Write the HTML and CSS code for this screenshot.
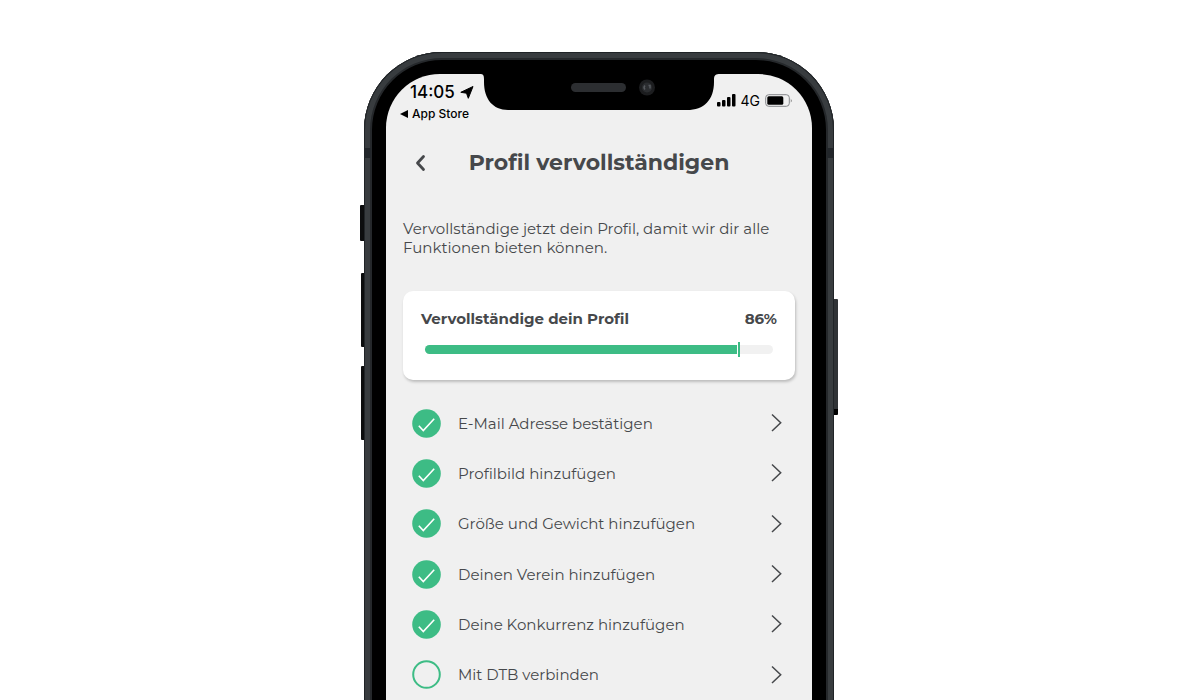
FILE: index.html
```html
<!DOCTYPE html>
<html lang="de">
<head>
<meta charset="utf-8">
<meta name="viewport" content="width=device-width, initial-scale=1">
<title>Profil vervollständigen</title>
<link rel="stylesheet" href="styles.css">
</head>
<body>
<svg width="0" height="0" class="sprite" aria-hidden="true">
  <symbol id="done" viewBox="0 0 29 29"><circle cx="14.5" cy="14.5" r="14.3" fill="#3dbc85"/><path d="M6.8 16.7 11.3 21.5 22.2 9.8" fill="none" stroke="#fff" stroke-width="1.6"/></symbol>
  <symbol id="open" viewBox="0 0 29 29"><circle cx="14.5" cy="14.5" r="13.3" fill="none" stroke="#3dbc85" stroke-width="2"/></symbol>
  <symbol id="next" viewBox="0 0 12 20"><path d="M2 1.500 10.700 9.700 2 18" fill="none" stroke="#46484b" stroke-width="1.5"/></symbol>
</svg>
<div class="phone">
  <span class="key key-mute"></span>
  <span class="key key-up"></span>
  <span class="key key-down"></span>
  <span class="key key-power"></span>
  <span class="seam seam-left"></span>
  <span class="seam seam-right"></span>
  <div class="screen">
    <svg class="notch" width="240" height="37" viewBox="0 0 240 37" aria-hidden="true">
      <path d="M0 0H240C236 0 234 1 234 5V8C234 26 224 36 207 36H28C13 36 4 25 4 8V5C4 1 3 0 0 0Z" fill="#000"/>
      <rect x="91" y="9" width="55" height="9" rx="4.5" fill="#2c2e31"/>
      <circle cx="167" cy="13.500" r="8" fill="#1c1d1f"/>
      <circle cx="167" cy="13.500" r="5" fill="#2b2d30"/>
      <path d="M165 11.500q-2 2 0 4M168.500 11.500h1.500v3" fill="none" stroke="#56595e" stroke-width="1.500"/>
    </svg>
    <div class="status">
      <div class="status-left">
        <div class="clock">14:05
          <svg width="14" height="13" viewBox="0 0 14 13" aria-hidden="true"><path d="M13 .5 8.300 12.300 6.500 7.200 .8 6.300Z" fill="#000" stroke="#000" stroke-linejoin="round"/></svg>
        </div>
        <a class="back-app" href="#"><svg width="8" height="8" viewBox="0 0 8 8" aria-hidden="true"><path d="M8 0V8L0 4Z" fill="#000"/></svg>App Store</a>
      </div>
      <div class="status-right">
        <svg width="19" height="13" viewBox="0 0 19 13" aria-hidden="true"><g fill="#000"><rect y="8" width="3.500" height="4.500" rx="1"/><rect x="5" y="6" width="3.500" height="6.500" rx="1"/><rect x="10" y="3" width="3.500" height="9.500" rx="1"/><rect x="15" y="0" width="3.500" height="12.500" rx="1"/></g></svg>
        <span>4G</span>
        <svg width="28" height="13" viewBox="0 0 28 13" aria-hidden="true"><rect x=".7" y=".7" width="23.600" height="11.600" rx="3" fill="none" stroke="#85878a"/><rect x="2.300" y="2.300" width="16" height="8.400" rx="1.500"/><path d="M25.800 4.500Q27.500 6.500 25.800 8.500Z" fill="#777"/></svg>
      </div>
    </div>
    <header class="titlebar">
      <button class="back" type="button" aria-label="Zurück"><svg width="12" height="18" viewBox="0 0 12 18"><path d="M8.500 2.500 2.500 9 8.500 15.500" fill="none" stroke="#46484b" stroke-width="2.800" stroke-linecap="round" stroke-linejoin="round"/></svg></button>
      <h1>Profil vervollständigen</h1>
    </header>
    <main class="content">
      <p class="intro">Vervollständige jetzt dein Profil, damit wir dir alle Funktionen bieten können.</p>
      <section class="card">
        <div class="card-head"><h2>Vervollständige dein Profil</h2><strong>86%</strong></div>
        <div class="bar" role="progressbar" aria-label="Profil" aria-valuenow="86" aria-valuemin="0" aria-valuemax="100"><div class="fill" style="width:90%"></div></div>
      </section>
      <nav class="tasks">
        <a class="task" href="#"><svg class="mark"><use href="#done"/></svg><span>E-Mail Adresse bestätigen</span><svg class="go"><use href="#next"/></svg></a>
        <a class="task" href="#"><svg class="mark"><use href="#done"/></svg><span>Profilbild hinzufügen</span><svg class="go"><use href="#next"/></svg></a>
        <a class="task" href="#"><svg class="mark"><use href="#done"/></svg><span>Größe und Gewicht hinzufügen</span><svg class="go"><use href="#next"/></svg></a>
        <a class="task" href="#"><svg class="mark"><use href="#done"/></svg><span>Deinen Verein hinzufügen</span><svg class="go"><use href="#next"/></svg></a>
        <a class="task" href="#"><svg class="mark"><use href="#done"/></svg><span>Deine Konkurrenz hinzufügen</span><svg class="go"><use href="#next"/></svg></a>
        <a class="task" href="#"><svg class="mark"><use href="#open"/></svg><span>Mit DTB verbinden</span><svg class="go"><use href="#next"/></svg></a>
      </nav>
    </main>
  </div>
</div>
</body>
</html>
```
FILE: styles.css
```css
* { box-sizing: border-box; }
body {
  margin: 0;
  height: 100vh;
  overflow: hidden;
  padding: 52px 2px 0 0;
  display: flex;
  justify-content: center;
  background: #fff;
  color: #46484b;
  font-family: Montserrat, Inter, "Liberation Sans", sans-serif;
}
.sprite { position: absolute; }
h1, h2, p { margin: 0; }
a { color: inherit; text-decoration: none; }
.phone {
  position: relative;
  width: 100%;
  max-width: 470px;
  display: flex;
  margin-bottom: -20px;
  padding: 22px 22px 0;
  border-radius: 78px 78px 0 0;
  background: #000;
  box-shadow: inset 0 0 0 1px #202427, inset 0 0 0 6px #383c3f, inset 0 0 0 8px #25282b;
}
.key { position: absolute; background: #0c0d0e; z-index: -1; }
.key-mute { left: -4px; top: 153px; width: 8px; height: 36px; border-radius: 1px; }
.key-up { left: -3px; top: 221px; width: 8px; height: 74px; border-radius: 1px; }
.key-down { left: -3px; top: 314px; width: 8px; height: 74px; border-radius: 1px; }
.key-power { right: -4px; top: 247px; width: 8px; height: 116px; border-radius: 1px; background: #303336; border-bottom: 6px solid #000; }
.seam { position: absolute; top: 96px; width: 6px; height: 10px; background: #22262a; }
.seam-left { left: 1px; }
.seam-right { right: 1px; }
.screen {
  position: relative;
  flex: 1;
  min-width: 0;
  border-radius: 54px 54px 0 0;
  background: #f0f0f0;
}
.notch { position: absolute; top: 0; left: 50%; margin-left: -119px; }
.status {
  position: relative;
  display: flex;
  justify-content: space-between;
  padding: 8px 19px 0 14px;
  color: #000;
  font-family: Inter, sans-serif;
}
.clock {
  display: flex;
  align-items: center;
  gap: 5px;
  padding-left: 10px;
  font-size: 17px;
  line-height: 21px;
  font-weight: 500;
}
.back-app {
  display: flex;
  align-items: center;
  gap: 4px;
  font-size: 12px;
  line-height: 21px;
  font-weight: 500;
}
.status-right {
  display: flex;
  align-items: center;
  gap: 5px;
  height: 36px;
  font-size: 14px;
}
.titlebar {
  display: grid;
  grid-template-columns: 36px 1fr 36px;
  align-items: center;
  padding: 22px 17px 0;
}
.back {
  display: flex;
  justify-content: center;
  padding: 0;
  border: 0;
  background: none;
}
h1 { font-size: 22px; line-height: 33px; font-weight: 700; text-align: center; }
.content { padding: 40px 17px 0; }
.intro { font-size: 15px; line-height: 19px; font-weight: 400; }
.card {
  margin-top: 34px;
  min-height: 89px;
  padding: 17px 18px;
  border-radius: 10px;
  background: #fff;
  box-shadow: 1px 2px 3px #00000038;
}
.card-head {
  display: flex;
  justify-content: space-between;
  font-size: 15px;
  line-height: 21px;
}
h2 { font-size: 15px; font-weight: 700; }
.bar {
  height: 9px;
  margin: 16px 4px 0;
  border-radius: 5px;
  background: #f1f1f1;
}
.fill {
  position: relative;
  height: 9px;
  border-radius: 5px 0 0 5px;
  border-right: 1px solid #fff;
  background: #3dbc85;
}
.fill::after {
  content: "";
  position: absolute;
  right: -3px;
  top: -3px;
  width: 2px;
  height: 15px;
  background: #3dbc85;
}
.tasks {
  display: grid;
  grid-auto-rows: 1fr;
  min-height: 302px;
  margin-top: 18px;
}
.task {
  display: grid;
  grid-template-columns: 29px 1fr 12px;
  gap: 17px;
  align-items: center;
  padding: 0 13px 0 9px;
  font-size: 15px;
  font-weight: 400;
}
.mark { width: 29px; height: 29px; }
.go { width: 12px; height: 20px; }
```
